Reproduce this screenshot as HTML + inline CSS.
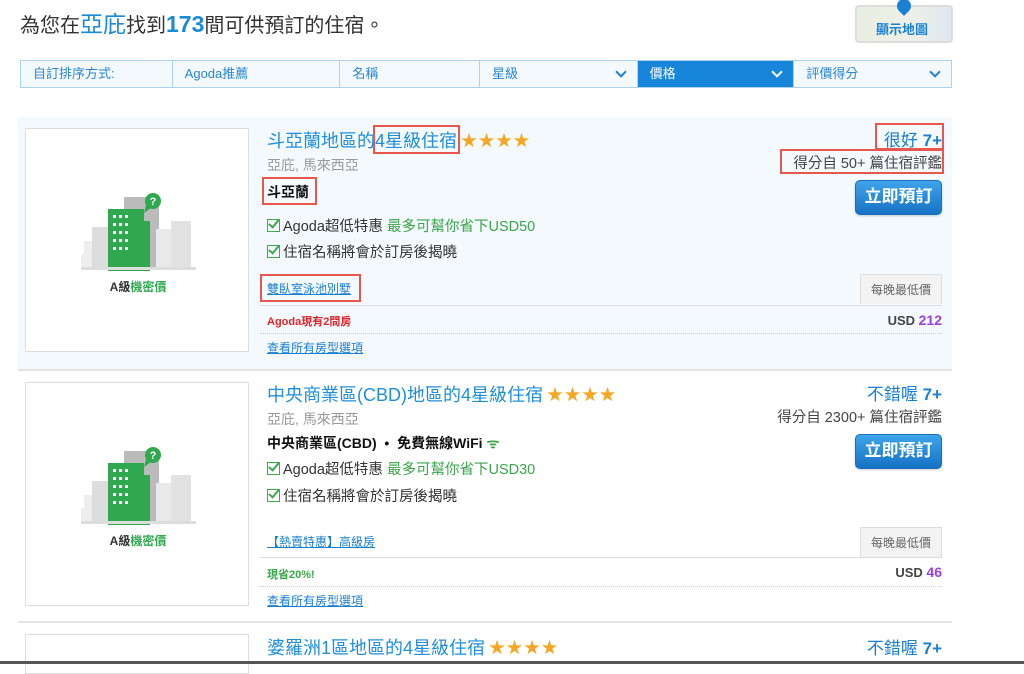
<!DOCTYPE html>
<html><head><meta charset="utf-8">
<style>
*{margin:0;padding:0;box-sizing:border-box}
body{width:1024px;height:664px;overflow:hidden;background:#fff;font-family:"Liberation Sans","Noto Sans CJK TC",sans-serif;position:relative;color:#333}
.a{position:absolute;white-space:nowrap}
.blue{color:#1a8ad8}
.sort{position:absolute;left:20px;top:60px;width:932px;height:28px;border:1px solid #a9d3f3;background:#f4f9fe;display:flex}
.sort div{border-right:1px solid #a9d3f3;font-size:13px;color:#2a86d3;line-height:26px;padding-left:12px;position:relative}
.sort div:last-child{border-right:none}
.chev{position:absolute;right:12px;top:7px;width:8px;height:8px;border-right:2.5px solid #1b7fcf;border-bottom:2.5px solid #1b7fcf;transform:rotate(45deg)}
.card{position:absolute;left:18px;width:934px}
.img{position:absolute;left:7px;width:224px;height:224px;background:#fff;border:1px solid #ddd}
.title{font-size:18px;color:#1f8fdc}
.star{color:#f5a623;font-size:16px;letter-spacing:1.5px;margin-left:4px;vertical-align:1px}
.loc{font-size:14px;color:#999}
.feat{font-size:14px;font-weight:bold;color:#111}
.chk{font-size:14.5px;color:#333}
.chk b{display:inline-block;width:13px;height:13px;border:1.5px solid #3aaa4a;margin-right:3px;vertical-align:-1px;position:relative}
.chk b:after{content:"";position:absolute;left:3px;top:-3px;width:4px;height:9px;border-right:2px solid #3aaa4a;border-bottom:2px solid #3aaa4a;transform:rotate(40deg)}
.g{color:#3aa64a}
.lnk{font-size:12px;color:#1a7fd0;text-decoration:underline}
.hl{position:absolute;left:242px;width:682px;border-top:1px solid #ddd}
.dot{position:absolute;left:242px;width:682px;border-top:1px dotted #ccc}
.rating{font-size:17px;color:#1a80d4;font-weight:normal;right:10px}
.rating b{font-weight:bold}
.rev{font-size:14.5px;color:#444;right:10px}
.btn{position:absolute;right:10px;width:87px;height:35px;border-radius:5px;background:linear-gradient(#3fa4ea,#1672c4);border:1px solid #1a6fc0;color:#fff;font-size:17px;font-weight:bold;text-align:center;line-height:32px;box-shadow:0 1px 2px rgba(0,0,0,.2)}
.ppn{position:absolute;right:10px;width:82px;height:30px;background:#f3f3f3;border:1px solid #ddd;border-bottom:none;font-size:12px;color:#666;text-align:center;line-height:30px}
.price{right:10px;font-size:13px;font-weight:bold;color:#444}
.price span{color:#9b3fe0;font-size:14px}
.red{position:absolute;border:2px solid #e8574e}
</style></head><body>

<div class="a" style="left:20px;top:5px;font-size:20px;color:#333">為您在<span class="blue" style="font-size:23px">亞庇</span>找到<b class="blue" style="font-size:23px">173</b>間可供預訂的住宿。</div>

<div class="a" style="left:855px;top:5px;width:98px;height:38px;border:2px solid #ddd;border-radius:4px;background:linear-gradient(90deg,#e8eee0,#eef0e8 60%,#dde8f0)">
<div class="a" style="left:40px;top:-8px;width:14px;height:14px;background:#1a80d4;border-radius:50% 50% 50% 0;transform:rotate(-45deg)"></div>
<div class="a" style="left:19px;top:12px;font-size:13px;font-weight:bold;color:#1a80d4">顯示地圖</div></div>

<div class="sort">
<div style="width:152px">自訂排序方式:</div>
<div style="width:168px">Agoda推薦</div>
<div style="width:140px">名稱</div>
<div style="width:158px">星級<span class="chev"></span></div>
<div style="width:157px;background:#1785da;color:#fff">價格<span class="chev" style="border-color:#fff"></span></div>
<div style="width:157px">評價得分<span class="chev"></span></div>
</div>

<!-- card 1 -->
<div class="card" style="top:117px;height:252px;background:#f4f9fe">
<div class="img" style="top:11px">
<svg width="224" height="224" viewBox="0 0 224 224">
<rect x="55" y="125" width="50" height="14" fill="#eee"/><rect x="58" y="112" width="20" height="14" fill="#eee"/>
<rect x="66" y="98" width="30" height="40" fill="#ddd"/>
<rect x="98" y="68" width="35" height="70" fill="#bbb"/>
<rect x="130" y="100" width="30" height="38" fill="#e9e9e9"/>
<rect x="145" y="92" width="20" height="46" fill="#e2e2e2"/>
<path d="M82 80 L118 80 L118 92 L124 92 L124 142 L82 142Z" fill="#2fa84f"/>
<g fill="#fff"><rect x="87" y="86" width="3" height="3"/><rect x="93" y="86" width="3" height="3"/><rect x="99" y="86" width="3" height="3"/><rect x="87" y="94" width="3" height="3"/><rect x="93" y="94" width="3" height="3"/><rect x="99" y="94" width="3" height="3"/><rect x="87" y="102" width="3" height="3"/><rect x="93" y="102" width="3" height="3"/><rect x="99" y="102" width="3" height="3"/><rect x="87" y="110" width="3" height="3"/><rect x="93" y="110" width="3" height="3"/><rect x="99" y="110" width="3" height="3"/><rect x="87" y="118" width="3" height="3"/><rect x="93" y="118" width="3" height="3"/><rect x="99" y="118" width="3" height="3"/></g>
<circle cx="127" cy="72" r="8" fill="#2fa84f"/><path d="M120 76 L118 84 L125 79Z" fill="#2fa84f"/>
<text x="127" y="76" font-size="11" font-weight="bold" fill="#fff" text-anchor="middle" font-family="Liberation Sans">?</text>
<rect x="55" y="138" width="115" height="3" fill="#ddd"/>
<text x="112" y="162" font-size="12" font-weight="bold" text-anchor="middle" font-family="Liberation Sans,Noto Sans CJK TC" fill="#333">A級<tspan fill="#2fa84f">機密價</tspan></text>
</svg></div>
<div class="a title" style="left:249px;top:10px">斗亞蘭地區的4星級住宿<span class="star">★★★★</span></div>
<div class="red" style="left:355px;top:8px;width:87px;height:29px"></div>
<div class="a loc" style="left:249px;top:38px">亞庇, 馬來西亞</div>
<div class="a feat" style="left:249px;top:65px">斗亞蘭</div>
<div class="red" style="left:244px;top:60px;width:55px;height:28px"></div>
<div class="a chk" style="left:249px;top:98px"><b></b>Agoda超低特惠 <span class="g">最多可幫你省下USD50</span></div>
<div class="a chk" style="left:249px;top:124px"><b></b>住宿名稱將會於訂房後揭曉</div>
<div class="a lnk" style="left:249px;top:163px">雙臥室泳池別墅</div>
<div class="red" style="left:242px;top:157px;width:101px;height:28px"></div>
<div class="hl" style="top:188px"></div>
<div class="a" style="left:249px;top:196px;font-size:11px;font-weight:bold;color:#e0262c">Agoda現有2間房</div>
<div class="dot" style="top:216px"></div>
<div class="a lnk" style="left:249px;top:222px">查看所有房型選項</div>
<div class="a rating" style="top:9px">很好 <b>7+</b></div>
<div class="red" style="left:857px;top:6px;width:69px;height:27px"></div>
<div class="a rev" style="top:35px">得分自 50+ 篇住宿評鑑</div>
<div class="red" style="left:762px;top:32px;width:164px;height:25px"></div>
<div class="btn" style="top:63px">立即預訂</div>
<div class="ppn" style="top:157px">每晚最低價</div>
<div class="a price" style="top:195px">USD <span>212</span></div>
</div>

<!-- card 2 -->
<div style="position:absolute;left:18px;top:369px;width:934px;border-top:2px solid #e4e4e4"></div>
<div class="card" style="top:371px;height:250px">
<div class="img" style="top:11px">
<svg width="224" height="224" viewBox="0 0 224 224">
<rect x="55" y="125" width="50" height="14" fill="#eee"/><rect x="58" y="112" width="20" height="14" fill="#eee"/>
<rect x="66" y="98" width="30" height="40" fill="#ddd"/>
<rect x="98" y="68" width="35" height="70" fill="#bbb"/>
<rect x="130" y="100" width="30" height="38" fill="#e9e9e9"/>
<rect x="145" y="92" width="20" height="46" fill="#e2e2e2"/>
<path d="M82 80 L118 80 L118 92 L124 92 L124 142 L82 142Z" fill="#2fa84f"/>
<g fill="#fff"><rect x="87" y="86" width="3" height="3"/><rect x="93" y="86" width="3" height="3"/><rect x="99" y="86" width="3" height="3"/><rect x="87" y="94" width="3" height="3"/><rect x="93" y="94" width="3" height="3"/><rect x="99" y="94" width="3" height="3"/><rect x="87" y="102" width="3" height="3"/><rect x="93" y="102" width="3" height="3"/><rect x="99" y="102" width="3" height="3"/><rect x="87" y="110" width="3" height="3"/><rect x="93" y="110" width="3" height="3"/><rect x="99" y="110" width="3" height="3"/><rect x="87" y="118" width="3" height="3"/><rect x="93" y="118" width="3" height="3"/><rect x="99" y="118" width="3" height="3"/></g>
<circle cx="127" cy="72" r="8" fill="#2fa84f"/><path d="M120 76 L118 84 L125 79Z" fill="#2fa84f"/>
<text x="127" y="76" font-size="11" font-weight="bold" fill="#fff" text-anchor="middle" font-family="Liberation Sans">?</text>
<rect x="55" y="138" width="115" height="3" fill="#ddd"/>
<text x="112" y="162" font-size="12" font-weight="bold" text-anchor="middle" font-family="Liberation Sans,Noto Sans CJK TC" fill="#333">A級<tspan fill="#2fa84f">機密價</tspan></text>
</svg></div>
<div class="a title" style="left:249px;top:10px">中央商業區(CBD)地區的4星級住宿<span class="star">★★★★</span></div>
<div class="a loc" style="left:249px;top:38px">亞庇, 馬來西亞</div>
<div class="a feat" style="left:249px;top:62px">中央商業區(CBD) &nbsp;•&nbsp; 免費無線WiFi <span style="color:#3aa64a">ᯤ</span></div>
<div class="a chk" style="left:249px;top:87px"><b></b>Agoda超低特惠 <span class="g">最多可幫你省下USD30</span></div>
<div class="a chk" style="left:249px;top:114px"><b></b>住宿名稱將會於訂房後揭曉</div>
<div class="a lnk" style="left:249px;top:162px">【熱賣特惠】高級房</div>
<div class="hl" style="top:186px"></div>
<div class="a" style="left:249px;top:195px;font-size:11px;font-weight:bold;color:#3aa64a">現省20%!</div>
<div class="dot" style="top:215px"></div>
<div class="a lnk" style="left:249px;top:221px">查看所有房型選項</div>
<div class="a rating" style="top:9px">不錯喔 <b>7+</b></div>
<div class="a rev" style="top:35px">得分自 2300+ 篇住宿評鑑</div>
<div class="btn" style="top:63px">立即預訂</div>
<div class="ppn" style="top:156px">每晚最低價</div>
<div class="a price" style="top:193px">USD <span>46</span></div>
</div>

<!-- card 3 -->
<div style="position:absolute;left:18px;top:621px;width:934px;border-top:2px solid #e4e4e4"></div>
<div class="img" style="left:25px;top:634px;height:40px;position:absolute"></div>
<div class="a title" style="left:267px;top:634px">婆羅洲1區地區的4星級住宿<span class="star">★★★★</span></div>
<div class="a rating" style="right:82px;top:634px">不錯喔 <b>7+</b></div>
<div style="position:absolute;left:0;top:661px;width:1024px;height:3px;background:#555"></div>
</body></html>
